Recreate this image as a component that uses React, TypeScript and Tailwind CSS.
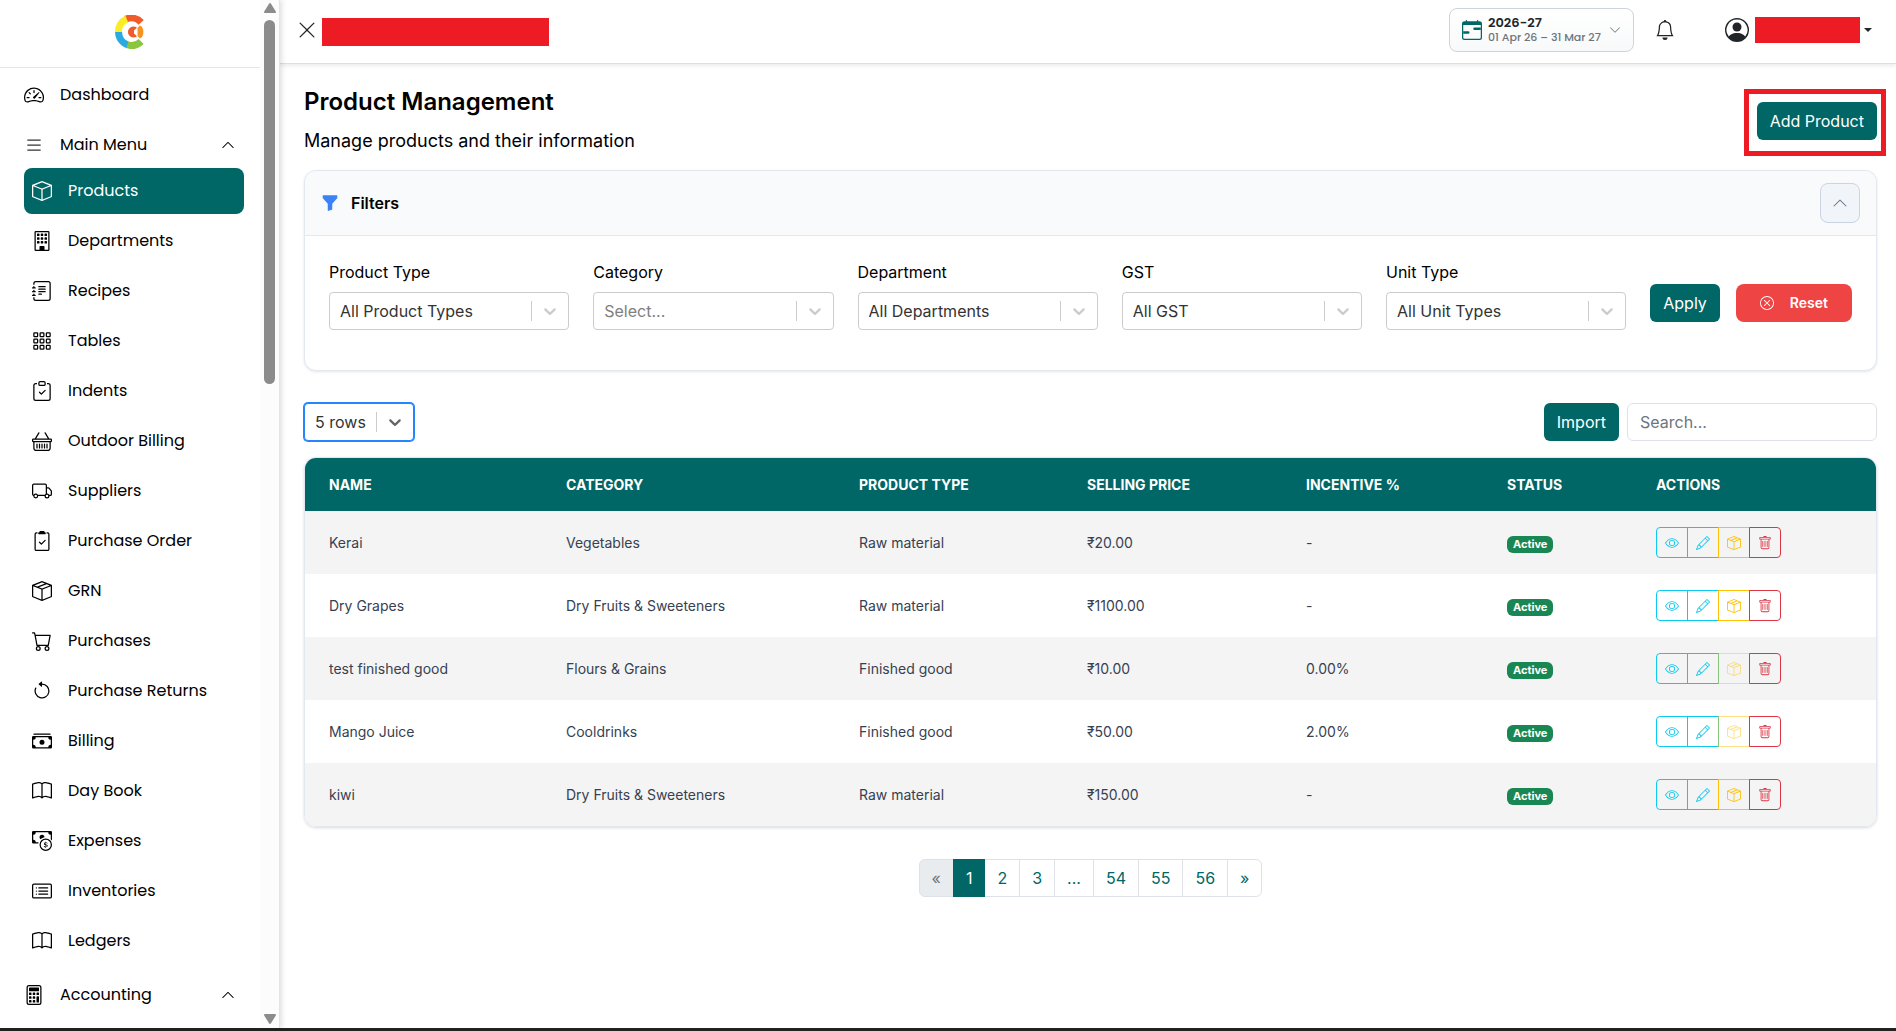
import type { ReactNode } from "react";
import type { IconType } from "react-icons";
import {
  BsArrowCounterclockwise,
  BsBasket,
  BsBell,
  BsBook,
  BsBox,
  BsBoxSeam,
  BsBuilding,
  BsCalculator,
  BsCalendarRange,
  BsCardList,
  BsCart,
  BsCashCoin,
  BsCashStack,
  BsChevronDown,
  BsChevronUp,
  BsClipboard2Check,
  BsClipboardCheck,
  BsEye,
  BsFunnelFill,
  BsGrid3X3Gap,
  BsJournalText,
  BsList,
  BsPencil,
  BsPersonCircle,
  BsSpeedometer2,
  BsTrash,
  BsTruck,
  BsXCircle,
  BsXLg,
} from "react-icons/bs";

const menuItems: { label: string; icon: IconType; active?: boolean }[] = [
  { label: "Products", icon: BsBox, active: true },
  { label: "Departments", icon: BsBuilding },
  { label: "Recipes", icon: BsJournalText },
  { label: "Tables", icon: BsGrid3X3Gap },
  { label: "Indents", icon: BsClipboardCheck },
  { label: "Outdoor Billing", icon: BsBasket },
  { label: "Suppliers", icon: BsTruck },
  { label: "Purchase Order", icon: BsClipboard2Check },
  { label: "GRN", icon: BsBoxSeam },
  { label: "Purchases", icon: BsCart },
  { label: "Purchase Returns", icon: BsArrowCounterclockwise },
  { label: "Billing", icon: BsCashStack },
  { label: "Day Book", icon: BsBook },
  { label: "Expenses", icon: BsCashCoin },
  { label: "Inventories", icon: BsCardList },
  { label: "Ledgers", icon: BsBook },
];

const filters = [
  { id: "product-type", label: "Product Type", value: "All Product Types" },
  { id: "category", label: "Category", value: "Select...", placeholder: true },
  { id: "department", label: "Department", value: "All Departments" },
  { id: "gst", label: "GST", value: "All GST" },
  { id: "unit-type", label: "Unit Type", value: "All Unit Types" },
];

const columns = [
  { label: "Name", width: "w-[237px]" },
  { label: "Category", width: "w-[293px]" },
  { label: "Product Type", width: "w-[228px]" },
  { label: "Selling Price", width: "w-[219px]" },
  { label: "Incentive %", width: "w-[201px]" },
  { label: "Status", width: "w-[149px]" },
  { label: "Actions", width: "w-[244px]" },
];

const products = [
  { name: "Kerai", category: "Vegetables", type: "Raw material", price: "₹20.00", incentive: "-" },
  { name: "Dry Grapes", category: "Dry Fruits & Sweeteners", type: "Raw material", price: "₹1100.00", incentive: "-" },
  { name: "test finished good", category: "Flours & Grains", type: "Finished good", price: "₹10.00", incentive: "0.00%" },
  { name: "Mango Juice", category: "Cooldrinks", type: "Finished good", price: "₹50.00", incentive: "2.00%" },
  { name: "kiwi", category: "Dry Fruits & Sweeteners", type: "Raw material", price: "₹150.00", incentive: "-" },
];

const pages = ["«", "1", "2", "3", "...", "54", "55", "56", "»"];

function Logo() {
  return (
    <svg viewBox="0 0 30 34" className="h-[34px] w-[30px]" fill="none" aria-label="Logo">
      <g strokeWidth="7">
        <path d="M10.6 4.3A13.5 13.5 0 0 1 26.2 7.4" stroke="#f15a2b" />
        <path d="M3.6 17.5A13.5 13.5 0 0 1 11.8 4" stroke="#f9ed25" />
        <path d="M13 30A13.5 13.5 0 0 1 3.6 17" stroke="#29abe2" />
        <path d="M26.2 26.6A13.5 13.5 0 0 1 12.4 29.8" stroke="#8cc63f" />
      </g>
      <path d="M25 10.500C29.500 12 29.500 22 25 23.500L22.500 21V13z" fill="#f7931e" />
      <path d="M22 12.800A5.500 5.500 0 1 0 22 21.200L19 18.500V15.500z" fill="#f15a2b" />
    </svg>
  );
}

function MenuGroup({ icon: Icon, label, muted }: { icon: IconType; label: string; muted?: boolean }) {
  return (
    <button type="button" className="flex h-[46px] w-full items-center gap-4 pl-6 pr-[25px] text-left">
      <Icon className={muted ? "size-5 text-[#333]" : "size-5"} />
      <span className="flex-1">{label}</span>
      <BsChevronUp className="size-[14px]" />
    </button>
  );
}

function Sidebar() {
  return (
    <aside className="relative z-10 flex w-[280px] shrink-0 border-r border-[#e4e4e4] bg-white font-[Poppins,Inter,sans-serif] text-base text-black shadow-[2px_0_5px_rgba(0,0,0,0.12)]">
      <div className="flex-1">
        <div className="flex h-[68px] items-center justify-center border-b border-[#e5e7eb] pb-1">
          <Logo />
        </div>
        <nav className="pt-1">
          <a href="#dashboard" className="mb-1 flex h-[46px] items-center gap-4 pl-6">
            <BsSpeedometer2 className="size-5" />
            Dashboard
          </a>
          <MenuGroup icon={BsList} label="Main Menu" muted />
          <ul className="mb-2 flex flex-col gap-1 pl-6 pr-4">
            {menuItems.map(({ label, icon: Icon, active }) => (
              <li key={label}>
                <a
                  href="#"
                  className={
                    active
                      ? "flex h-[46px] items-center gap-4 rounded-lg bg-[#006666] pl-2 text-white"
                      : "flex h-[46px] items-center gap-4 pl-2"
                  }
                >
                  <Icon className="size-5" />
                  {label}
                </a>
              </li>
            ))}
          </ul>
          <MenuGroup icon={BsCalculator} label="Accounting" />
        </nav>
      </div>

      {/* Scrollbar */}
      <div className="flex w-[19px] flex-col items-center bg-[#fcfcfc] pb-1 pt-[3px]">
        <svg viewBox="0 0 12 10" className="h-[10px] w-3" fill="#8b8b8b">
          <path d="M5 .8Q6-.6 7 .8L11.800 8.500Q12.200 10 11 10H1Q-.2 10 .2 8.500z" />
        </svg>
        <div className="mt-[7px] h-[364px] w-[11px] rounded-full bg-[#8b8b8b]" />
        <svg viewBox="0 0 12 10" className="mt-auto h-[10px] w-3" fill="#8b8b8b">
          <path d="M5 9.200Q6 10.600 7 9.200L11.800 1.500Q12.200 0 11 0H1Q-.2 0 .2 1.500z" />
        </svg>
      </div>
    </aside>
  );
}

function Topbar() {
  return (
    <header className="flex h-16 items-center border-b border-[#dedede] bg-white pb-1 pl-[17px] pr-6 text-[#212529] shadow-[0_2px_4px_rgba(0,0,0,0.08)]">
      <button type="button" aria-label="Close menu">
        <BsXLg className="size-5" />
      </button>
      <div className="ml-[5px] mt-1 h-7 w-[227px] bg-[#ed1c24]" />

      <button
        type="button"
        className="ml-auto flex h-11 w-[185px] items-center rounded-lg border border-[#ced4da] bg-gradient-to-b from-white to-[#f8f9fa] pl-3 pr-3 text-left font-[Poppins,Inter,sans-serif]"
      >
        <BsCalendarRange className="size-5 text-[#006666]" />
        <span className="ml-[6px] flex-1 whitespace-nowrap">
          <span className="block text-[13px] font-semibold leading-[15px]">2026-27</span>
          <span className="block text-[11px] font-medium leading-[14px] text-[#6c757d]">01 Apr 26 – 31 Mar 27</span>
        </span>
        <BsChevronDown className="size-3 text-[#6c757d]" />
      </button>

      <button type="button" aria-label="Notifications" className="ml-[21px]">
        <BsBell className="size-5" />
      </button>
      <button type="button" aria-label="Account" className="ml-[50px] flex items-center">
        <BsPersonCircle className="size-6" />
        <span className="ml-[6px] h-[26px] w-[105px] bg-[#ed1c24]" />
        <span className="ml-1 border-x-4 border-t-4 border-x-transparent border-t-[#212529]" />
      </button>
    </header>
  );
}

function Select({ id, label, value, placeholder, focused }: {
  id: string;
  label?: string;
  value: string;
  placeholder?: boolean;
  focused?: boolean;
}) {
  return (
    <div className="relative">
      <select
        id={id}
        aria-label={label}
        className={`h-[38px] w-full appearance-none rounded border bg-white pl-[10px] pr-10 outline-none ${
          placeholder ? "text-[#808080]" : "text-[#333]"
        } ${focused ? "border-[#2684ff] shadow-[0_0_0_1px_#2684ff]" : "border-[#ccc]"}`}
      >
        <option>{value}</option>
      </select>
      <span
        className={`pointer-events-none absolute inset-y-0 right-px flex items-center ${
          focused ? "text-[#666]" : "text-[#ccc]"
        }`}
      >
        <span className="h-5 w-px bg-[#ccc]" />
        <svg viewBox="0 0 20 20" className="mx-2 size-5" fill="currentColor">
          <path d="M4.516 7.548c0.436-0.446 1.043-0.481 1.576 0l3.908 3.747 3.908-3.747c0.533-0.481 1.141-0.446 1.574 0 0.436 0.445 0.408 1.197 0 1.615-0.406 0.418-4.695 4.502-4.695 4.502-0.217 0.223-0.502 0.335-0.787 0.335s-0.570-0.112-0.789-0.335c0 0-4.287-4.084-4.695-4.502s-0.436-1.170 0-1.615z" />
        </svg>
      </span>
    </div>
  );
}

function PrimaryButton({ children }: { children: ReactNode }) {
  return (
    <button type="button" className="h-[38px] whitespace-nowrap rounded-md bg-[#006666] px-[13px] text-white">
      {children}
    </button>
  );
}

function Filters() {
  return (
    <section className="rounded-xl border border-[#e2e8f0] bg-white shadow-[0_1px_3px_rgba(0,0,0,0.1)]">
      <div className="flex h-[65px] items-center justify-between rounded-t-xl border-b border-[#e2e8f0] bg-[#f8fafc] px-4">
        <h2 className="flex items-center gap-3 font-semibold">
          <BsFunnelFill className="size-[18px] text-[#3b82f6]" />
          Filters
        </h2>
        <button
          type="button"
          aria-label="Collapse filters"
          className="flex size-10 items-center justify-center rounded-lg border border-[#cbd5e1] bg-[#f1f5f9] text-[#64748b]"
        >
          <BsChevronUp className="size-4" />
        </button>
      </div>

      <div className="flex items-center gap-6 p-6">
        {filters.map((filter) => (
          <div key={filter.id} className="mb-4 flex-1">
            <label htmlFor={filter.id} className="mb-2 block">
              {filter.label}
            </label>
            <Select id={filter.id} value={filter.value} placeholder={filter.placeholder} />
          </div>
        ))}
        <div className="flex gap-4">
          <PrimaryButton>Apply</PrimaryButton>
          <button
            type="button"
            className="flex h-[38px] items-center gap-4 rounded-lg bg-[#ef4444] px-6 text-sm font-semibold text-white"
          >
            <BsXCircle className="size-[14px]" />
            Reset
          </button>
        </div>
      </div>
    </section>
  );
}

function RowActions({ name, locked }: { name: string; locked: boolean }) {
  return (
    <div className="flex">
      <button
        type="button"
        aria-label={`View ${name}`}
        className="flex h-[31px] w-8 items-center justify-center rounded-l border border-[#0dcaf0] text-[#0dcaf0]"
      >
        <BsEye className="size-[14px]" />
      </button>
      <button
        type="button"
        aria-label={`Edit ${name}`}
        className="-ml-px flex h-[31px] w-8 items-center justify-center border border-[#0dcaf0] text-[#0dcaf0]"
      >
        <BsPencil className="size-[14px]" />
      </button>
      <button
        type="button"
        aria-label={`Stock of ${name}`}
        disabled={locked}
        className="-ml-px flex h-[31px] w-8 items-center justify-center border border-[#ffc107] text-[#ffc107] disabled:opacity-50"
      >
        <BsBoxSeam className="size-[14px]" />
      </button>
      <button
        type="button"
        aria-label={`Delete ${name}`}
        className="z-[1] -ml-px flex h-[31px] w-8 items-center justify-center rounded-r border border-[#dc3545] text-[#dc3545]"
      >
        <BsTrash className="size-[14px]" />
      </button>
    </div>
  );
}

function ProductTable() {
  return (
    <div className="mt-4 overflow-hidden rounded-xl border border-[#e2e8f0] shadow-[0_1px_3px_rgba(0,0,0,0.15)]">
      <table className="w-full table-fixed text-left text-sm">
        <thead className="bg-[#006666] uppercase text-white">
          <tr className="h-[53px]">
            {columns.map((column) => (
              <th key={column.label} className={`${column.width} px-6 font-bold`}>
                {column.label}
              </th>
            ))}
          </tr>
        </thead>
        <tbody className="text-[#374151]">
          {products.map((product) => (
            <tr key={product.name} className="h-[63px] odd:bg-[#f4f4f4] even:bg-white">
              <td className="px-6">{product.name}</td>
              <td className="px-6">{product.category}</td>
              <td className="px-6">{product.type}</td>
              <td className="px-6">{product.price}</td>
              <td className="px-6">{product.incentive}</td>
              <td className="px-6 pt-1">
                <span className="flex h-[17px] w-fit items-center rounded-md bg-[#198754] px-[6px] text-[11px] font-bold text-white">
                  Active
                </span>
              </td>
              <td className="px-6">
                <RowActions name={product.name} locked={product.type === "Finished good"} />
              </td>
            </tr>
          ))}
        </tbody>
      </table>
    </div>
  );
}

function Pagination() {
  return (
    <nav aria-label="Pages" className="mt-8 flex justify-center">
      {pages.map((page) => {
        let look = "bg-white text-[#006666] border-[#dee2e6]";
        if (page === "1") look = "bg-[#006666] text-white border-[#006666] z-[1]";
        if (page === "«") look = "bg-[#e9ecef] text-[#6c757d] border-[#dee2e6]";
        return (
          <button
            key={page}
            type="button"
            disabled={page === "«"}
            className={`-ml-px h-[38px] border px-3 first:ml-0 first:rounded-l-md last:rounded-r-md ${look}`}
          >
            {page}
          </button>
        );
      })}
    </nav>
  );
}

export default function App() {
  return (
    <div className="flex min-h-screen flex-col bg-white font-[Inter,sans-serif] text-base text-black">
      <div className="flex flex-1">
        <Sidebar />
        <div className="min-w-0 flex-1">
          <Topbar />
          <main className="pl-6 pr-[19px] pt-5">
            <div className="mb-4 flex items-start justify-between">
              <div>
                <h1 className="mb-2 text-2xl font-semibold leading-9">Product Management</h1>
                <p className="text-lg leading-[26px]">Manage products and their information</p>
              </div>
              <div className="relative mt-[18px]">
                <PrimaryButton>Add Product</PrimaryButton>
                <div className="pointer-events-none absolute -bottom-4 -left-[13px] -right-[9px] -top-[13px] border-[5px] border-[#ed1c24]" />
              </div>
            </div>

            <Filters />

            <div className="mt-8 flex items-center gap-2">
              <div className="mr-auto w-[110px]">
                <Select id="page-size" label="Rows per page" value="5 rows" focused />
              </div>
              <PrimaryButton>Import</PrimaryButton>
              <input
                type="search"
                aria-label="Search products"
                placeholder="Search..."
                className="h-[38px] w-[250px] rounded-md border border-[#dee2e6] bg-white px-3 outline-none placeholder:text-[#6c757d]"
              />
            </div>

            <ProductTable />
            <Pagination />
          </main>
        </div>
      </div>
      <div className="h-[3px] bg-[#222]" />
    </div>
  );
}
